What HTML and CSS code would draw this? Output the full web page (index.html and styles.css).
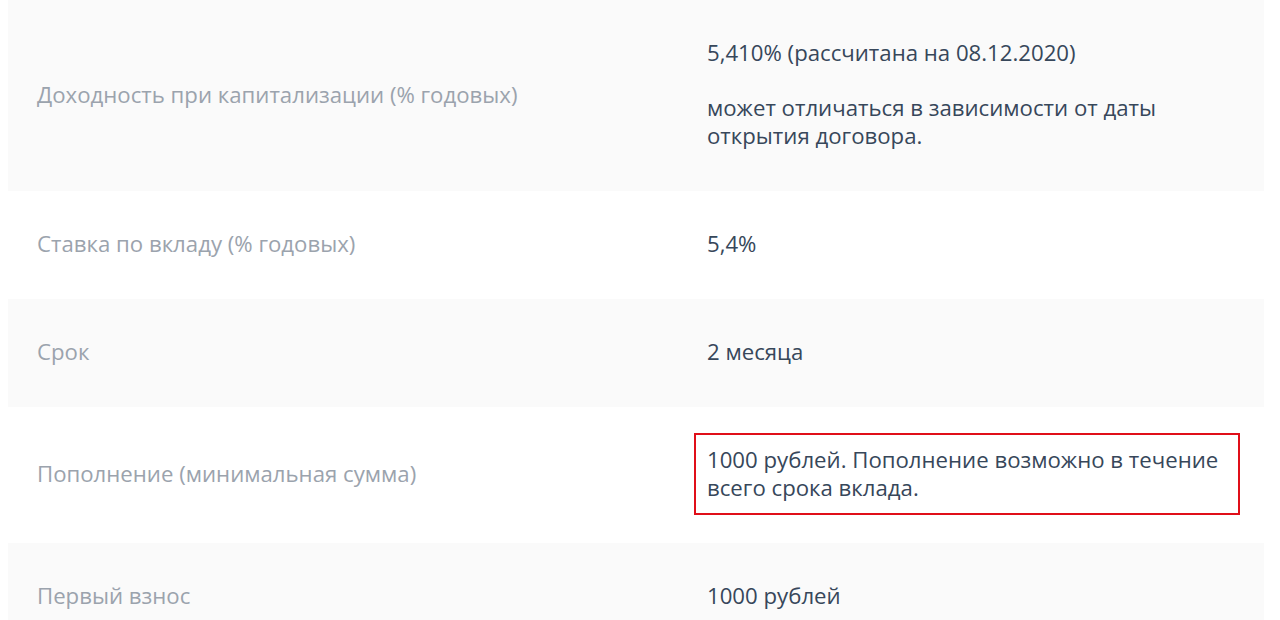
FILE: index.html
```html
<!DOCTYPE html>
<html lang="ru">
<head>
    <meta charset="UTF-8">
    <meta name="viewport" content="width=device-width, initial-scale=1.0">
    <title>Условия вклада</title>
    <link rel="stylesheet" href="styles.css">
</head>
<body>
    <div class="terms">
        <div class="row row-gray">
            <div class="label">Доходность при капитализации (% годовых)</div>
            <div class="value">
                <p>5,410% (рассчитана на 08.12.2020)</p>
                <p>может отличаться в зависимости от даты открытия договора.</p>
            </div>
        </div>
        <div class="row">
            <div class="label">Ставка по вкладу (% годовых)</div>
            <div class="value">5,4%</div>
        </div>
        <div class="row row-gray">
            <div class="label">Срок</div>
            <div class="value">2 месяца</div>
        </div>
        <div class="row">
            <div class="label">Пополнение (минимальная сумма)</div>
            <div class="value"><div class="marked">1000 рублей. Пополнение возможно в течение всего срока вклада.</div></div>
        </div>
        <div class="row row-gray">
            <div class="label">Первый взнос</div>
            <div class="value">1000 рублей</div>
        </div>
    </div>
</body>
</html>
```

FILE: styles.css
```css
body {
    margin: 0;
    padding: 0;
    background: #fff;
    font-family: "Open Sans", "Noto Sans", sans-serif;
    font-size: 22.2px;
    line-height: 28px;
}

.terms {
    margin: 0 16px 0 8px;
}

.row {
    display: grid;
    grid-template-columns: 670px 1fr;
    align-items: center;
    padding: 39px 30px 41px 29px;
}

.row-gray {
    background: #fafafa;
}

.label {
    color: #9ba3ad;
}

.value {
    color: #37475a;
}

.value p {
    margin: 0 0 27px;
}

.value p:last-child {
    margin-bottom: 0;
}

.marked {
    position: relative;
}

/* red highlight frame from the screenshot */
.marked::after {
    content: "";
    position: absolute;
    top: -13px;
    bottom: -13px;
    left: -13px;
    right: -6px;
    border: 2px solid #e00f19;
}
```
